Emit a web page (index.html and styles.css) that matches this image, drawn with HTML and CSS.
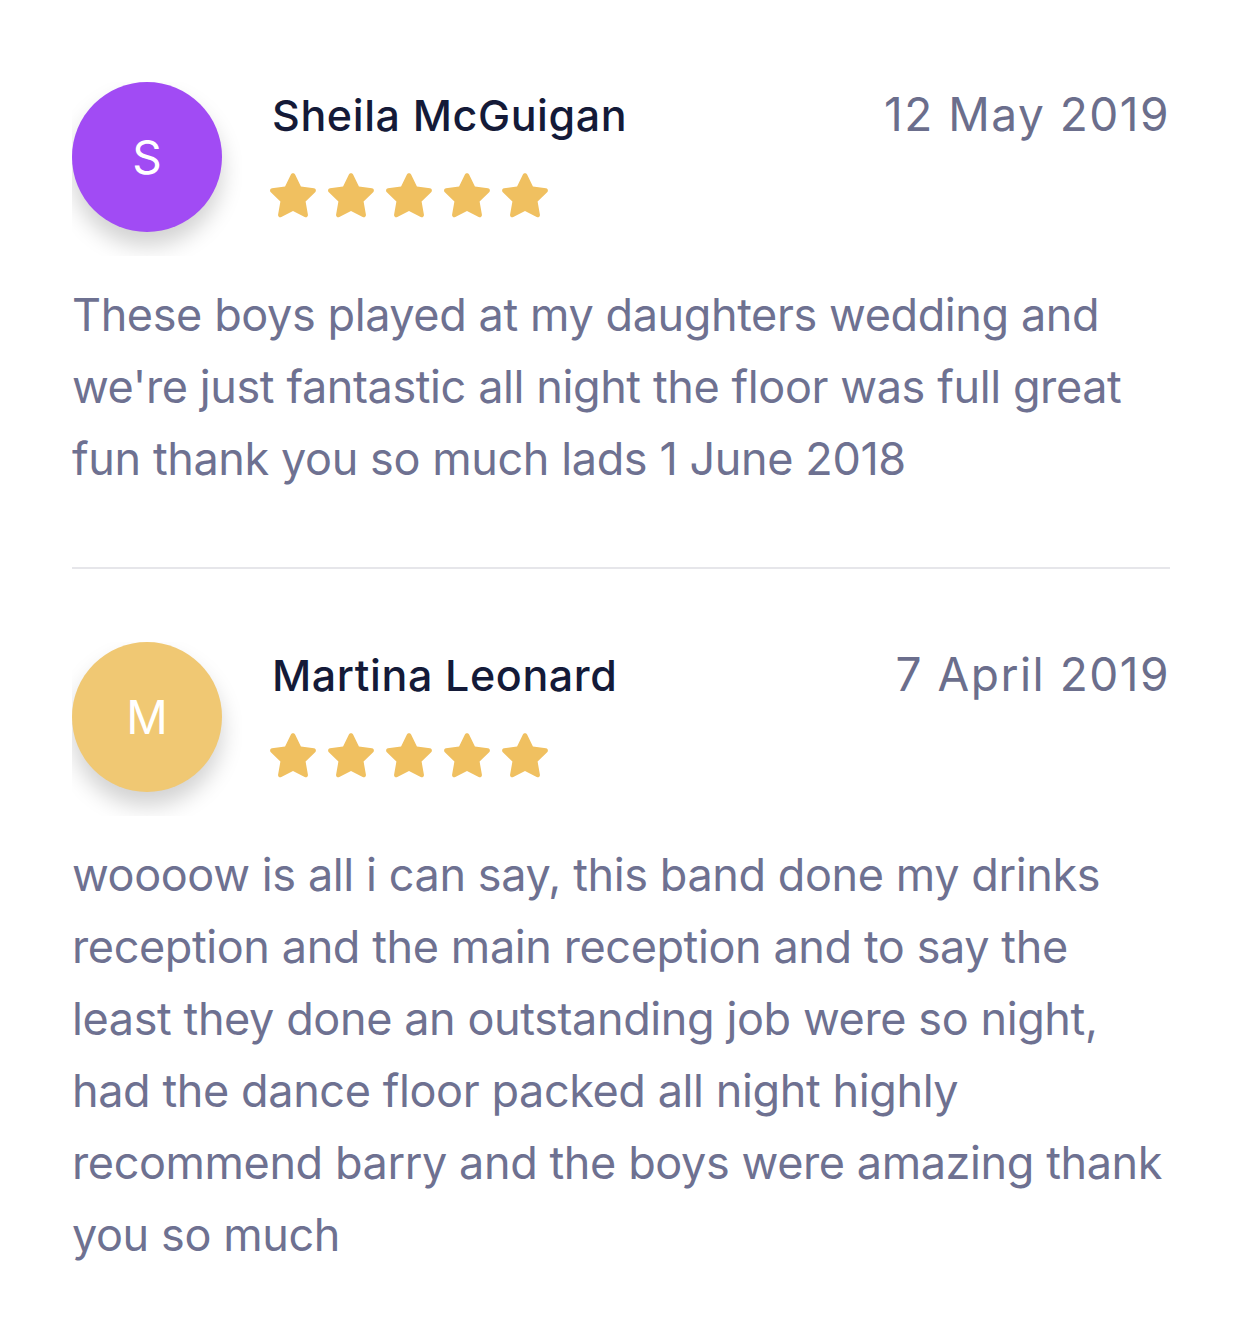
FILE: index.html
```html
<!DOCTYPE html>
<html lang="en">
<head>
    <meta charset="UTF-8">
    <meta name="viewport" content="width=device-width, initial-scale=1.0">
    <title>Reviews</title>
    <link rel="stylesheet" href="styles.css">
</head>
<body>
    <div class="reviews">
        <!-- Review 1 -->
        <div class="review">
            <div class="review-head">
                <div class="avatar-wrap">
                    <div class="avatar avatar-purple">S</div>
                </div>
                <div class="review-meta">
                    <div class="meta-top">
                        <h3 class="reviewer">Sheila McGuigan</h3>
                        <span class="review-date">12 May 2019</span>
                    </div>
                    <div class="stars">
                        <svg class="star" viewBox="0 0 24 24"><path d="M12 2.2c.4 0 .7.2.9.6l2.5 5.1 5.6.8c.8.1 1.1 1.1.5 1.7l-4.1 4 1 5.6c.1.8-.7 1.4-1.4 1l-5-2.6-5 2.6c-.7.4-1.5-.2-1.4-1l1-5.6-4.1-4c-.6-.6-.3-1.6.5-1.7l5.6-.8 2.5-5.1c.2-.4.5-.6.9-.6z"/></svg>
                        <svg class="star" viewBox="0 0 24 24"><path d="M12 2.2c.4 0 .7.2.9.6l2.5 5.1 5.6.8c.8.1 1.1 1.1.5 1.7l-4.1 4 1 5.6c.1.8-.7 1.4-1.4 1l-5-2.6-5 2.6c-.7.4-1.5-.2-1.4-1l1-5.6-4.1-4c-.6-.6-.3-1.6.5-1.7l5.6-.8 2.5-5.1c.2-.4.5-.6.9-.6z"/></svg>
                        <svg class="star" viewBox="0 0 24 24"><path d="M12 2.2c.4 0 .7.2.9.6l2.5 5.1 5.6.8c.8.1 1.1 1.1.5 1.7l-4.1 4 1 5.6c.1.8-.7 1.4-1.4 1l-5-2.6-5 2.6c-.7.4-1.5-.2-1.4-1l1-5.6-4.1-4c-.6-.6-.3-1.6.5-1.7l5.6-.8 2.5-5.1c.2-.4.5-.6.9-.6z"/></svg>
                        <svg class="star" viewBox="0 0 24 24"><path d="M12 2.2c.4 0 .7.2.9.6l2.5 5.1 5.6.8c.8.1 1.1 1.1.5 1.7l-4.1 4 1 5.6c.1.8-.7 1.4-1.4 1l-5-2.6-5 2.6c-.7.4-1.5-.2-1.4-1l1-5.6-4.1-4c-.6-.6-.3-1.6.5-1.7l5.6-.8 2.5-5.1c.2-.4.5-.6.9-.6z"/></svg>
                        <svg class="star" viewBox="0 0 24 24"><path d="M12 2.2c.4 0 .7.2.9.6l2.5 5.1 5.6.8c.8.1 1.1 1.1.5 1.7l-4.1 4 1 5.6c.1.8-.7 1.4-1.4 1l-5-2.6-5 2.6c-.7.4-1.5-.2-1.4-1l1-5.6-4.1-4c-.6-.6-.3-1.6.5-1.7l5.6-.8 2.5-5.1c.2-.4.5-.6.9-.6z"/></svg>
                    </div>
                </div>
            </div>
            <p class="review-text">These boys played at my daughters wedding and we're just fantastic all night the floor was full great fun thank you so much lads 1 June 2018</p>
        </div>

        <!-- Review 2 -->
        <div class="review">
            <div class="review-head">
                <div class="avatar-wrap">
                    <div class="avatar avatar-yellow">M</div>
                </div>
                <div class="review-meta">
                    <div class="meta-top">
                        <h3 class="reviewer">Martina Leonard</h3>
                        <span class="review-date">7 April 2019</span>
                    </div>
                    <div class="stars">
                        <svg class="star" viewBox="0 0 24 24"><path d="M12 2.2c.4 0 .7.2.9.6l2.5 5.1 5.6.8c.8.1 1.1 1.1.5 1.7l-4.1 4 1 5.6c.1.8-.7 1.4-1.4 1l-5-2.6-5 2.6c-.7.4-1.5-.2-1.4-1l1-5.6-4.1-4c-.6-.6-.3-1.6.5-1.7l5.6-.8 2.5-5.1c.2-.4.5-.6.9-.6z"/></svg>
                        <svg class="star" viewBox="0 0 24 24"><path d="M12 2.2c.4 0 .7.2.9.6l2.5 5.1 5.6.8c.8.1 1.1 1.1.5 1.7l-4.1 4 1 5.6c.1.8-.7 1.4-1.4 1l-5-2.6-5 2.6c-.7.4-1.5-.2-1.4-1l1-5.6-4.1-4c-.6-.6-.3-1.6.5-1.7l5.6-.8 2.5-5.1c.2-.4.5-.6.9-.6z"/></svg>
                        <svg class="star" viewBox="0 0 24 24"><path d="M12 2.2c.4 0 .7.2.9.6l2.5 5.1 5.6.8c.8.1 1.1 1.1.5 1.7l-4.1 4 1 5.6c.1.8-.7 1.4-1.4 1l-5-2.6-5 2.6c-.7.4-1.5-.2-1.4-1l1-5.6-4.1-4c-.6-.6-.3-1.6.5-1.7l5.6-.8 2.5-5.1c.2-.4.5-.6.9-.6z"/></svg>
                        <svg class="star" viewBox="0 0 24 24"><path d="M12 2.2c.4 0 .7.2.9.6l2.5 5.1 5.6.8c.8.1 1.1 1.1.5 1.7l-4.1 4 1 5.6c.1.8-.7 1.4-1.4 1l-5-2.6-5 2.6c-.7.4-1.5-.2-1.4-1l1-5.6-4.1-4c-.6-.6-.3-1.6.5-1.7l5.6-.8 2.5-5.1c.2-.4.5-.6.9-.6z"/></svg>
                        <svg class="star" viewBox="0 0 24 24"><path d="M12 2.2c.4 0 .7.2.9.6l2.5 5.1 5.6.8c.8.1 1.1 1.1.5 1.7l-4.1 4 1 5.6c.1.8-.7 1.4-1.4 1l-5-2.6-5 2.6c-.7.4-1.5-.2-1.4-1l1-5.6-4.1-4c-.6-.6-.3-1.6.5-1.7l5.6-.8 2.5-5.1c.2-.4.5-.6.9-.6z"/></svg>
                    </div>
                </div>
            </div>
            <p class="review-text">woooow is all i can say, this band done my drinks reception and the main reception and to say the least they done an outstanding job were so night, had the dance floor packed all night highly recommend barry and the boys were amazing thank you so much</p>
        </div>
    </div>
</body>
</html>
```

FILE: styles.css
```css
* {
    margin: 0;
    padding: 0;
    box-sizing: border-box;
}

body {
    font-family: Inter, "Noto Sans", sans-serif;
    background-color: #ffffff;
    overflow-x: hidden;
}

.reviews {
    padding: 82px 72px 40px 72px;
}

.review {
    padding-bottom: 72px;
    border-bottom: 2px solid #e6e6ea;
}

.review + .review {
    padding-top: 73px;
    border-bottom: none;
}

.review-head {
    display: flex;
    gap: 50px;
}

/* shadow is clipped by the wrapper */
.avatar-wrap {
    width: 170px;
    height: 174px;
    overflow: hidden;
    flex-shrink: 0;
    margin-right: -20px;
}

.avatar {
    width: 150px;
    height: 150px;
    border-radius: 50%;
    color: white;
    font-size: 46px;
    display: flex;
    align-items: center;
    justify-content: center;
    box-shadow: 0 14px 22px rgba(0,0,0,0.18);
}

.avatar-purple {
    background-color: #a14bf4;
}

.avatar-yellow {
    background-color: #f0c873;
}

.review-meta {
    flex-grow: 1;
}

.meta-top {
    display: flex;
    justify-content: space-between;
    align-items: baseline;
    height: 74px;
    padding-top: 4px;
}

.reviewer {
    font-size: 43px;
    font-weight: 500;
    letter-spacing: 0.6px;
    color: #141a38;
}

.review-date {
    font-size: 46px;
    letter-spacing: 1.5px;
    color: #6b6e8c;
}

.stars {
    display: flex;
    gap: 2px;
    margin-top: 12px;
    margin-left: -7px;
}

.star {
    width: 56px;
    height: 56px;
    fill: #f0c060;
}

.review-text {
    font-size: 45px;
    letter-spacing: -0.4px;
    line-height: 72px;
    color: #6e7191;
    margin-top: 23px;
}
```
